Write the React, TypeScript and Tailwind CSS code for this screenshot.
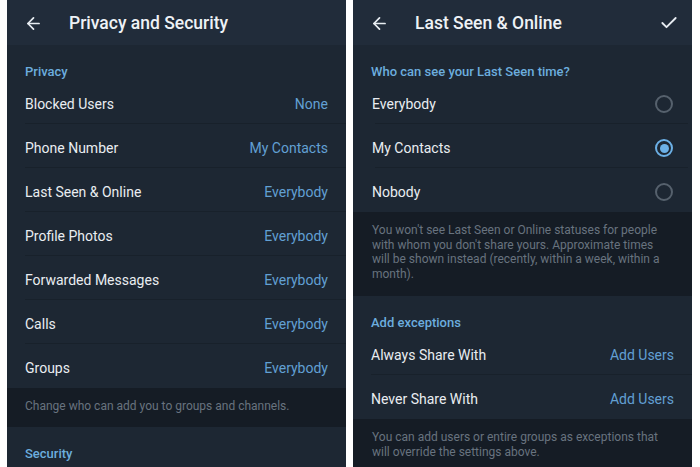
import { ArrowLeft, Check } from "lucide-react";

type Row = { label: string; value: string };

const privacyRows: Row[] = [
  { label: "Blocked Users", value: "None" },
  { label: "Phone Number", value: "My Contacts" },
  { label: "Last Seen & Online", value: "Everybody" },
  { label: "Profile Photos", value: "Everybody" },
  { label: "Forwarded Messages", value: "Everybody" },
  { label: "Calls", value: "Everybody" },
  { label: "Groups", value: "Everybody" },
];

function Header({ title, check }: { title: string; check?: boolean }) {
  return (
    <div className="h-[45px] flex items-center pl-[17px] pr-[13px] pt-[1px] bg-[#212c3a] shrink-0">
      <ArrowLeft size={19} strokeWidth={2.2} className="text-[#e8edf2]" />
      <h1 className="ml-[26px] text-[17.5px] font-medium text-[#eef2f6] flex-1">{title}</h1>
      {check && <Check size={20} strokeWidth={2.2} className="text-[#e8edf2]" />}
    </div>
  );
}

function SectionLabel({ children }: { children: string }) {
  return (
    <div className="h-[35px] shrink-0 pt-[19px] px-[18px] text-[13px] leading-[16px] font-medium text-[#6cadde]">
      {children}
    </div>
  );
}

function ValueRow({ row, last }: { row: Row; last?: boolean }) {
  return (
    <div className="h-[44px] shrink-0 pl-[18px] pt-[4px] relative flex items-center">
      <span className="flex-1 text-[14px] text-[#e9edf1]">{row.label}</span>
      <span className="pr-[18px] text-[14px] text-[#62a0d3]">{row.value}</span>
      {!last && <div className="absolute left-[18px] right-0 bottom-0 h-px bg-[#18212b]" />}
    </div>
  );
}

function Radio({ checked }: { checked?: boolean }) {
  if (checked) {
    return (
      <div className="w-[18px] h-[18px] rounded-full border-2 border-[#6cb0e6] flex items-center justify-center">
        <div className="w-[9px] h-[9px] rounded-full bg-[#6cb0e6]" />
      </div>
    );
  }
  return <div className="w-[18px] h-[18px] rounded-full border-2 border-[#56616d]" />;
}

function RadioRow({ label, checked, last }: { label: string; checked?: boolean; last?: boolean }) {
  return (
    <div className="h-[44px] shrink-0 pl-[19px] pr-[19px] pt-[4px] relative flex items-center">
      <span className="flex-1 text-[14px] text-[#e9edf1]">{label}</span>
      <Radio checked={checked} />
      {!last && <div className="absolute left-[22px] right-[4px] bottom-0 h-px bg-[#18212b]" />}
    </div>
  );
}

function Footnote({ children, className }: { children: string; className?: string }) {
  return (
    <div className={`bg-[#151c25] text-[12px] leading-[14.5px] text-[#68737f] ${className ?? ""}`}>
      {children}
    </div>
  );
}

export default function App() {
  return (
    <div
      className="w-[700px] h-[467px] overflow-hidden bg-white flex pl-[7px] gap-[7px]"
      style={{ fontFamily: "Roboto, 'Noto Sans', sans-serif" }}
    >
      <div className="w-[339px] h-full bg-[#1d2733] flex flex-col">
        <Header title="Privacy and Security" />
        <SectionLabel>Privacy</SectionLabel>
        {privacyRows.map((r, i) => (
          <ValueRow key={r.label} row={r} last={i === privacyRows.length - 1} />
        ))}
        <Footnote className="h-[39px] shrink-0 px-[18px] pt-[11px]">Change who can add you to groups and channels.</Footnote>
        <SectionLabel>Security</SectionLabel>
      </div>

      <div className="w-[339px] h-full bg-[#1d2733] flex flex-col">
        <Header title="Last Seen & Online" check />
        <SectionLabel>Who can see your Last Seen time?</SectionLabel>
        <RadioRow label="Everybody" />
        <RadioRow label="My Contacts" checked />
        <RadioRow label="Nobody" last />
        <Footnote className="h-[84px] shrink-0 pl-[19px] pr-[26px] pt-[11px]">
          You won't see Last Seen or Online statuses for people with whom you don't share yours. Approximate times will be shown instead (recently, within a week, within a month).
        </Footnote>
        <SectionLabel>Add exceptions</SectionLabel>
        <ValueRow row={{ label: "Always Share With", value: "Add Users" }} />
        <ValueRow row={{ label: "Never Share With", value: "Add Users" }} last />
        <Footnote className="flex-1 pl-[19px] pr-[26px] pt-[11px]">
          You can add users or entire groups as exceptions that will override the settings above.
        </Footnote>
      </div>
    </div>
  );
}
